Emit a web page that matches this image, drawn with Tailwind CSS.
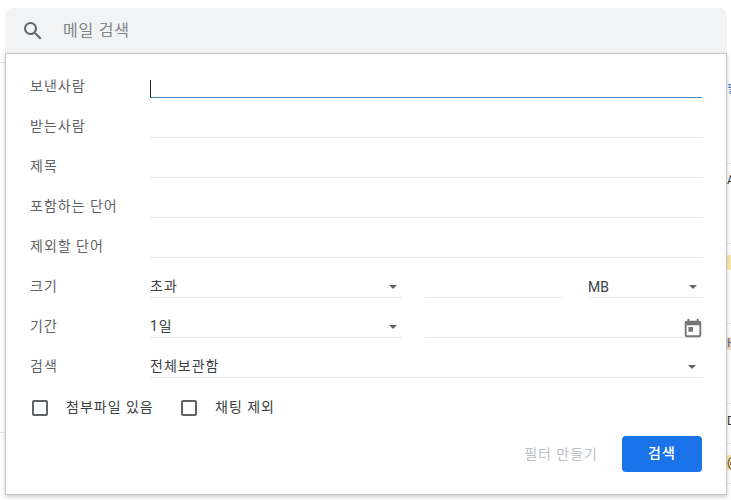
<!DOCTYPE html>
<html lang="ko">
<head>
    <meta charset="UTF-8">
    <title>메일 검색</title>
    <script src="https://cdn.jsdelivr.net/npm/@tailwindcss/browser@4"></script>
</head>
<body class="bg-white h-[500px] w-[731px] overflow-hidden relative font-['Roboto','Noto_Sans_CJK_KR',sans-serif]">

    <!-- mail list peeking out behind the dialog -->
    <div class="absolute left-0 top-[62px] w-[5px] h-px bg-gray-200"></div>
    <div class="absolute left-0 top-[432px] w-[5px] h-px bg-gray-200"></div>
    <div class="absolute left-[727px] top-[163px] w-[4px] h-px bg-gray-200"></div>
    <div class="absolute left-[727px] top-[243px] w-[4px] h-px bg-gray-200"></div>
    <div class="absolute left-[727px] top-[323px] w-[4px] h-px bg-gray-200"></div>
    <div class="absolute left-[727px] top-[403px] w-[4px] h-px bg-gray-200"></div>
    <div class="absolute left-[727px] top-[443px] w-[4px] h-px bg-gray-200"></div>
    <div class="absolute left-[727px] top-[483px] w-[4px] h-px bg-gray-200"></div>
    <div class="absolute left-[727px] top-[84px] w-[4px] h-[11px] overflow-hidden text-[11px] leading-[11px] text-[#4a73c9]">필</div>
    <div class="absolute left-[727px] top-[175px] w-[4px] h-[11px] overflow-hidden text-[12px] leading-[11px] text-[#333]">A</div>
    <div class="absolute left-[727px] top-[255px] w-[4px] h-[15px] bg-[#fde9a8]"></div>
    <div class="absolute left-[727px] top-[337px] w-[4px] h-[13px] overflow-hidden bg-[#f3d9c0] text-[12px] leading-[13px] text-[#4a6fa5]">H</div>
    <div class="absolute left-[727px] top-[415px] w-[4px] h-[13px] overflow-hidden text-[12px] leading-[13px] text-[#333]">D</div>
    <div class="absolute left-[727px] top-[455px] w-[4px] h-[15px] overflow-hidden bg-[#fde9a8] text-[12px] leading-[15px] text-[#333]">@</div>

    <div class="relative ml-[5px] mt-[8px] w-[722px]">
        <!-- search bar -->
        <div class="h-[45px] bg-[#f1f3f4] rounded-t-lg flex items-center pl-[16px]">
            <svg class="w-6 h-6 text-[#5f6368]" viewBox="0 0 24 24" fill="currentColor">
                <path d="M15.5 14h-.79l-.28-.27A6.471 6.471 0 0 0 16 9.5 6.5 6.5 0 1 0 9.5 16c1.61 0 3.09-.59 4.23-1.57l.27.28v.79l5 4.99L20.49 19l-4.99-5zm-6 0C7.01 14 5 11.99 5 9.5S7.01 5 9.5 5 14 7.01 14 9.5 11.99 14 9.5 14z"/>
            </svg>
            <span class="ml-[18px] text-base tracking-[0.75px] text-[#80868b]">메일 검색</span>
        </div>

        <!-- advanced search panel -->
        <div class="h-[442px] bg-white border border-[#c4c6c8] shadow-[0_2px_4px_rgba(60,64,67,0.25)] pt-[4px] pl-[24px] pr-[24px] text-sm tracking-[1px] text-[#3c4043]">
            <div class="flex h-10 items-end">
                <div class="w-[120px] h-[30px] pt-[8px] leading-[20px] text-[#5f6368]">보낸사람</div>
                <div class="flex-1 h-[30px] flex flex-col justify-end">
                    <div class="w-px h-[17px] bg-[#222]"></div>
                    <div class="h-px bg-[#4a86c0]"></div>
                </div>
            </div>
            <div class="flex h-10 items-end">
                <div class="w-[120px] h-[30px] pt-[8px] leading-[20px] text-[#5f6368]">받는사람</div>
                <div class="flex-1 h-[30px] border-b border-[#e8eaed]"></div>
            </div>
            <div class="flex h-10 items-end">
                <div class="w-[120px] h-[30px] pt-[8px] leading-[20px] text-[#5f6368]">제목</div>
                <div class="flex-1 h-[30px] border-b border-[#e8eaed]"></div>
            </div>
            <div class="flex h-10 items-end">
                <div class="w-[120px] h-[30px] pt-[8px] leading-[20px] text-[#5f6368]">포함하는 단어</div>
                <div class="flex-1 h-[30px] border-b border-[#e8eaed]"></div>
            </div>
            <div class="flex h-10 items-end">
                <div class="w-[120px] h-[30px] pt-[8px] leading-[20px] text-[#5f6368]">제외할 단어</div>
                <div class="flex-1 h-[30px] border-b border-[#e8eaed]"></div>
            </div>
            <div class="flex h-10 items-end">
                <div class="w-[120px] h-[30px] pt-[8px] leading-[20px] text-[#5f6368]">크기</div>
                <div class="w-[252px] h-[30px] pt-[8px] leading-[20px] border-b border-[#e8eaed] flex justify-between">
                    <span>초과</span>
                    <span class="mt-[9px] mr-[5px] w-0 h-0 border-x-[4px] border-x-transparent border-t-[4px] border-t-[#5f6368]"></span>
                </div>
                <div class="ml-[24px] w-[138px] h-[30px] border-b border-[#e8eaed]"></div>
                <div class="ml-[24px] flex-1 h-[30px] pt-[9px] leading-[20px] tracking-normal border-b border-[#e8eaed] flex justify-between">
                    <span>MB</span>
                    <span class="mt-[8px] mr-[5px] w-0 h-0 border-x-[4px] border-x-transparent border-t-[4px] border-t-[#5f6368]"></span>
                </div>
            </div>
            <div class="flex h-10 items-end">
                <div class="w-[120px] h-[30px] pt-[8px] leading-[20px] text-[#5f6368]">기간</div>
                <div class="w-[252px] h-[30px] pt-[8px] leading-[20px] border-b border-[#e8eaed] flex justify-between">
                    <span>1일</span>
                    <span class="mt-[9px] mr-[5px] w-0 h-0 border-x-[4px] border-x-transparent border-t-[4px] border-t-[#5f6368]"></span>
                </div>
                <div class="ml-[24px] flex-1 h-[30px] border-b border-[#e8eaed] flex justify-end">
                    <svg class="w-[22px] h-[22px] -mr-[2px] mt-[9px] text-[#757575]" viewBox="0 0 24 24" fill="currentColor">
                        <path d="M19 4h-1V2h-2v2H8V2H6v2H5c-1.1 0-2 .9-2 2v14c0 1.1.9 2 2 2h14c1.1 0 2-.9 2-2V6c0-1.1-.9-2-2-2zm0 16H5V9h14v11zM7 11h5v5H7z"/>
                    </svg>
                </div>
            </div>
            <div class="flex h-10 items-end">
                <div class="w-[120px] h-[30px] pt-[8px] leading-[20px] text-[#5f6368]">검색</div>
                <div class="flex-1 h-[30px] pt-[8px] leading-[20px] border-b border-[#e8eaed] flex justify-between">
                    <span>전체보관함</span>
                    <span class="mt-[9px] mr-[6px] w-0 h-0 border-x-[4px] border-x-transparent border-t-[4px] border-t-[#5f6368]"></span>
                </div>
            </div>

            <!-- checkboxes -->
            <div class="flex items-center h-[16px] mt-[22px] ml-[2px]">
                <span class="w-4 h-4 border-2 border-[#5f6368] rounded-[2px]"></span>
                <span class="ml-[18px] w-[115px] -mt-[3px]">첨부파일 있음</span>
                <span class="w-4 h-4 border-2 border-[#5f6368] rounded-[2px]"></span>
                <span class="ml-[18px] -mt-[3px]">채팅 제외</span>
            </div>

            <!-- actions -->
            <div class="flex justify-end items-center mt-[20px]">
                <span class="text-[#bdc1c6] -mt-[1px]">필터 만들기</span>
                <button class="ml-[24px] w-20 h-9 pb-[2px] rounded bg-[#1a73e8] text-white font-medium">검색</button>
            </div>
        </div>
    </div>

</body>
</html>
